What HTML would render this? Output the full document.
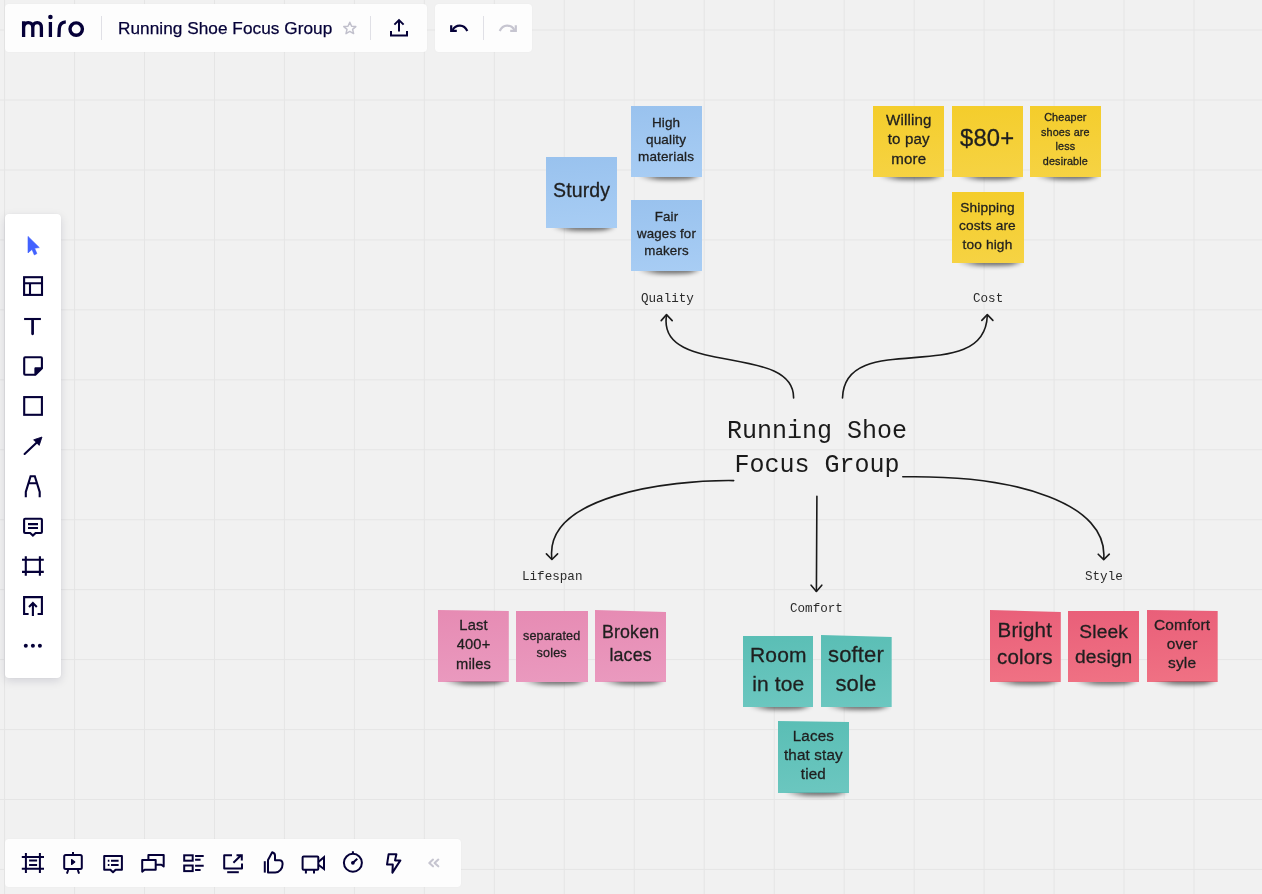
<!DOCTYPE html>
<html><head><meta charset="utf-8">
<style>
html,body{margin:0;padding:0;}
body{width:1262px;height:894px;overflow:hidden;position:relative;background:#f1f1f1;font-family:"Liberation Sans",sans-serif;}
.grid{position:absolute;left:0;top:0;width:1262px;height:894px;}
.panel{position:absolute;background:#fdfdfd;border-radius:4px;box-shadow:0 0 1.5px rgba(0,0,0,0.05);}
.ic{position:absolute;overflow:visible}
.st{position:absolute;width:71px;height:71px;display:flex;align-items:center;justify-content:center;text-align:center;color:#1f1f1f;font-family:"Liberation Sans",sans-serif;}
.st{z-index:1}
.st::after{content:"";position:absolute;left:12%;right:4%;top:calc(100% - 4px);height:7px;background:linear-gradient(to right,rgba(0,0,0,0.1),rgba(0,0,0,0.5) 30%,rgba(0,0,0,0.55) 85%,rgba(0,0,0,0.2));filter:blur(2px);z-index:-1;border-radius:0 0 50% 50%;clip-path:inset(4px -10px -10px -10px);}
.st span{display:block;will-change:transform;letter-spacing:0.15px;-webkit-text-stroke:0.3px #1f1f1f}
.blue{background:linear-gradient(175deg,#99c2ee,#a8cdf4);}
.yel{background:linear-gradient(175deg,#f4cd2b,#f6d344);}
.pink{background:linear-gradient(175deg,#e68bb3,#ea9abf);}
.teal{background:linear-gradient(175deg,#5abeb5,#6cc7c0);}
.red{background:linear-gradient(175deg,#e95f79,#f07284);}
.lbl{position:absolute;font-family:"Liberation Mono",monospace;font-size:12.6px;color:#2a2a2a;white-space:nowrap;will-change:transform;}
</style></head>
<body>
<svg class="grid" width="1262" height="894" viewBox="0 0 1262 894" style="background:none"><g fill="#e5e5e5"><rect x="4.07" y="0" width="1" height="894"/><rect x="74.04" y="0" width="1" height="894"/><rect x="144.00" y="0" width="1" height="894"/><rect x="213.97" y="0" width="1" height="894"/><rect x="283.94" y="0" width="1" height="894"/><rect x="353.90" y="0" width="1" height="894"/><rect x="423.87" y="0" width="1" height="894"/><rect x="493.84" y="0" width="1" height="894"/><rect x="563.81" y="0" width="1" height="894"/><rect x="633.77" y="0" width="1" height="894"/><rect x="703.74" y="0" width="1" height="894"/><rect x="773.71" y="0" width="1" height="894"/><rect x="843.67" y="0" width="1" height="894"/><rect x="913.64" y="0" width="1" height="894"/><rect x="983.61" y="0" width="1" height="894"/><rect x="1053.57" y="0" width="1" height="894"/><rect x="1123.54" y="0" width="1" height="894"/><rect x="1193.51" y="0" width="1" height="894"/><rect x="0" y="29.55" width="1262" height="1"/><rect x="0" y="99.50" width="1262" height="1"/><rect x="0" y="169.45" width="1262" height="1"/><rect x="0" y="239.40" width="1262" height="1"/><rect x="0" y="309.35" width="1262" height="1"/><rect x="0" y="379.30" width="1262" height="1"/><rect x="0" y="449.25" width="1262" height="1"/><rect x="0" y="519.20" width="1262" height="1"/><rect x="0" y="589.15" width="1262" height="1"/><rect x="0" y="659.10" width="1262" height="1"/><rect x="0" y="729.05" width="1262" height="1"/><rect x="0" y="799.00" width="1262" height="1"/><rect x="0" y="868.95" width="1262" height="1"/></g></svg>

<!-- stickies -->
<div class="st blue" style="left:546px;top:157px;width:70.5px;height:71px;font-size:19.5px;line-height:26px;"><span style="margin-top:-6px">Sturdy</span></div>
<div class="st blue" style="left:631px;top:106px;font-size:13.5px;line-height:17.2px;"><span style="margin-top:-3px">High<br>quality<br>materials</span></div>
<div class="st blue" style="left:631px;top:200px;font-size:13.3px;line-height:17.2px;"><span style="margin-top:-3px">Fair<br>wages for<br>makers</span></div>

<div class="st yel" style="left:873px;top:106px;width:70.5px;font-size:15.1px;line-height:19.3px;"><span style="margin-top:-5px">Willing<br>to pay<br>more</span></div>
<div class="st yel" style="left:952px;top:106px;font-size:23.8px;line-height:30px;"><span style="margin-top:-8px">$80+</span></div>
<div class="st yel" style="left:1030px;top:106px;width:70.7px;font-size:10.8px;line-height:14.6px;"><span style="margin-top:-4px">Cheaper<br>shoes are<br>less<br>desirable</span></div>
<div class="st yel" style="left:951.5px;top:192px;width:72px;font-size:13.7px;line-height:18.3px;"><span style="margin-top:-2px">Shipping<br>costs are<br>too high</span></div>

<div class="st pink" style="clip-path:polygon(0 0,100% 1px,100% calc(100% + 14px),0 calc(100% + 14px));left:438px;top:610px;height:71.5px;width:70.8px;font-size:14.7px;line-height:19.3px;"><span style="margin-top:-1.5px">Last<br>400+<br>miles</span></div>
<div class="st pink" style="left:516px;top:611px;width:72px;font-size:12.6px;line-height:16.5px;"><span style="margin-top:-5px">separated<br>soles</span></div>
<div class="st pink" style="clip-path:polygon(0 0,100% 2px,100% calc(100% + 14px),0 calc(100% + 14px));left:595px;top:610px;height:71.8px;font-size:17.8px;line-height:23.4px;"><span style="margin-top:-3px">Broken<br>laces</span></div>

<div class="st teal" style="left:742.5px;top:636px;width:70.7px;font-size:21px;line-height:28.9px;"><span style="margin-top:-3px">Room<br>in toe</span></div>
<div class="st teal" style="clip-path:polygon(0 0,100% 2px,100% calc(100% + 14px),0 calc(100% + 14px));left:821px;top:635px;height:72px;width:70.7px;font-size:22px;line-height:29.2px;"><span style="margin-top:-3px">softer<br>sole</span></div>
<div class="st teal" style="clip-path:polygon(0 0,100% 1px,100% calc(100% + 14px),0 calc(100% + 14px));left:778px;top:721px;height:71.8px;width:71px;font-size:15.2px;line-height:19.2px;"><span style="margin-top:-4px">Laces<br>that stay<br>tied</span></div>

<div class="st red" style="clip-path:polygon(0 0,100% 2px,100% calc(100% + 14px),0 calc(100% + 14px));left:989.5px;top:610px;height:71.8px;width:71.3px;font-size:20.5px;line-height:26.6px;"><span style="margin-top:-5px">Bright<br>colors</span></div>
<div class="st red" style="left:1068px;top:611px;width:71px;font-size:19.2px;line-height:25.3px;"><span style="margin-top:-5px">Sleek<br>design</span></div>
<div class="st red" style="clip-path:polygon(0 0,100% 1px,100% calc(100% + 14px),0 calc(100% + 14px));left:1147px;top:610px;height:71.5px;width:70.7px;font-size:15.5px;line-height:19.2px;"><span style="margin-top:-3px">Comfort<br>over<br>syle</span></div>

<!-- labels -->
<div class="lbl" style="left:640.5px;top:292px;">Quality</div>
<div class="lbl" style="left:972.5px;top:292px;">Cost</div>
<div class="lbl" style="left:521.5px;top:570px;">Lifespan</div>
<div class="lbl" style="left:789.5px;top:602px;">Comfort</div>
<div class="lbl" style="left:1084.5px;top:570px;">Style</div>

<div style="position:absolute;left:727px;top:414.5px;font-family:'Liberation Mono',monospace;font-size:25px;line-height:34px;color:#1a1a1a;white-space:pre;text-align:center;will-change:transform;">Running Shoe
Focus Group</div>

<svg class="ic" style="left:0;top:0" width="1262" height="894" viewBox="0 0 1262 894">
 <g fill="none" stroke="#1a1a1a" stroke-width="1.6" stroke-linecap="round" stroke-linejoin="round">
  <path d="M793.6 398 C794.3 342.7 656.8 377.1 666.5 315.5"/>
  <path d="M661.2 320.6 L666.5 314.6 L672.2 320.6"/>
  <path d="M842.5 398 C844.5 327.1 984.8 388.5 987.3 315.5"/>
  <path d="M981.8 320.4 L987.3 314.6 L992.9 320.4"/>
  <path d="M733.7 480.6 C668 479.8 544 496 551.9 559"/>
  <path d="M546.4 553.9 L551.9 559.5 L557.6 553.9"/>
  <path d="M902.8 476.8 C1019.8 474.8 1108.6 504.4 1103.7 559"/>
  <path d="M1098.2 554.2 L1103.7 559.6 L1109.3 554.2"/>
  <path d="M816.9 496.2 L816.4 591.3"/>
  <path d="M811.1 585.2 L816.4 591.5 L821.8 585.2"/>
 </g>
</svg>

<!-- top-left panel -->
<div class="panel" style="left:5px;top:4px;width:422px;height:48px;"></div>
<div class="panel" style="left:435px;top:4px;width:97px;height:48px;"></div>
<svg class="ic" style="left:0;top:0" width="540" height="60" viewBox="0 0 540 60">
 <g fill="none" stroke="#050038" stroke-width="3.3">
  <path d="M23.6 37 V21.2 M23.6 28 C23.8 24.5 25.6 22.7 28.2 22.7 C31 22.7 32.8 24.6 32.8 27.8 V37 M32.8 27.8 C32.8 24.6 34.6 22.7 37.2 22.7 C39.8 22.7 41.4 24.6 41.4 27.8 V37"/>
  <path d="M50.4 22 V37"/>
  <path d="M58.9 37 L59.3 28.5 C59.6 24.2 62 22.2 65.8 21.9"/>
  <circle cx="76.2" cy="29.1" r="6.2" stroke-width="3.4"/>
 </g>
 <circle cx="50.4" cy="17" r="2.3" fill="#050038"/>
 <rect x="101" y="16" width="1" height="24" fill="#e0e0e6"/>
 <rect x="370" y="16" width="1" height="24" fill="#e0e0e6"/>
 <rect x="483" y="16" width="1" height="24" fill="#e0e0e6"/>
 <path d="M349.8 22.3 L351.6 26.2 L355.8 26.6 L352.6 29.4 L353.6 33.6 L349.8 31.4 L346 33.6 L347 29.4 L343.8 26.6 L348 26.2 Z" fill="none" stroke="#c1c0cc" stroke-width="1.5" stroke-linejoin="round"/>
 <g fill="none" stroke="#050038" stroke-width="2">
  <path d="M391 31 V35.6 H407 V31"/>
  <path d="M399 31.6 V20.6 M394.4 24.6 L399 20.1 L403.6 24.6"/>
 </g>
 <g fill="none" stroke="#050038" stroke-width="2.2">
  <path d="M452.6 30 C456 24.2 464 24 467.3 31"/>
  <path d="M451.2 25.2 V30.8 H456.8" stroke-linejoin="miter"/>
 </g>
 <g fill="none" stroke="#c6c5d0" stroke-width="2.2">
  <path d="M514.4 30 C511 24.2 503 24 499.7 31"/>
  <path d="M515.8 25.2 V30.8 H510.2"/>
 </g>
</svg>
<div style="position:absolute;left:118px;top:17px;font-size:17.2px;line-height:22px;color:#050038;white-space:nowrap;will-change:transform;-webkit-text-stroke:0.25px #050038;letter-spacing:0.05px;">Running Shoe Focus Group</div>

<!-- left toolbar -->
<div class="panel" style="left:5px;top:214px;width:56px;height:464px;background:#fff;box-shadow:0 3px 10px rgba(5,0,56,0.13),0 0 1.5px rgba(5,0,56,0.08);"></div>

<!-- bottom toolbar -->
<div class="panel" style="left:5px;top:839px;width:456px;height:48px;"></div>
<svg class="ic" style="left:0;top:200px" width="70" height="480" viewBox="0 200 70 480">
 <path d="M28 236.4 L39.3 247.6 L34.6 248.2 L36.9 253.6 L34.3 254.9 L32 249.4 L28 252.9 Z" fill="#4262ff" stroke="#4262ff" stroke-width="0.6" stroke-linejoin="round"/>
 <g fill="none" stroke="#050038" stroke-width="2.1">
  <rect x="24.1" y="277.2" width="17.9" height="17.7"/>
  <path d="M24 283.2 H42 M30 283.2 V295"/>
  <path d="M24.1 319 H40.9"/><path d="M32.6 320.4 V333.8" stroke-width="2.7" stroke-linecap="round"/>
  <path d="M25.2 357.2 H40.9 C41.5 357.2 41.9 357.6 41.9 358.2 V368.2 L35.4 374.8 H25.2 C24.6 374.8 24.2 374.4 24.2 373.8 V358.2 C24.2 357.6 24.6 357.2 25.2 357.2 Z"/>
  <rect x="24.2" y="397.1" width="17.7" height="17.7"/>
  <path d="M24.6 454 L36.5 442.8" stroke-linecap="round"/>
  <path d="M25.8 497.3 V492 L30.6 476.3 H34.8 L39.7 492 V497.3 M28.4 483.2 H37"/>
  <path d="M25.1 518.8 H40.9 C41.5 518.8 41.9 519.2 41.9 519.8 V532 C41.9 532.6 41.5 533 40.9 533 H35.6 L32.9 535.6 L30.2 533 H25.1 C24.5 533 24.1 532.6 24.1 532 V519.8 C24.1 519.2 24.5 518.8 25.1 518.8 Z"/>
  <path d="M28 524.1 H38 M28 528 H38"/>
  <path d="M22 559.7 H43.8 M22 571.9 H43.8 M25.8 556.2 V575.8 M39.9 556.2 V575.8"/>
  <path d="M28.6 614 H24.1 V597.1 H41.9 V614 H37.6"/>
  <path d="M32.9 616 V603.2 M29 607 L32.9 603.1 L36.8 607"/>
 </g>
 <path d="M42 437 L33.6 439.8 L39.2 445.4 Z" fill="#050038" stroke="#050038" stroke-width="0.8" stroke-linejoin="round"/>
 <path d="M34.4 375.6 L42.9 367.2 H35.6 C34.9 367.2 34.4 367.7 34.4 368.4 Z" fill="#050038"/>
 <g fill="#050038"><circle cx="25.8" cy="645.8" r="2"/><circle cx="32.9" cy="645.8" r="2"/><circle cx="39.9" cy="645.8" r="2"/></g>
</svg>
<svg class="ic" style="left:0;top:840px" width="470" height="50" viewBox="0 840 470 50">
 <g fill="none" stroke="#050038" stroke-width="2">
  <path d="M21.8 856.9 H44 M21.8 868.8 H44 M25.9 853.1 V872.9 M39.9 853.1 V872.9 M29.1 860.6 H37.1 M29.1 865 H37.1"/>
  <rect x="64.2" y="855" width="17.6" height="14" rx="1.5"/>
  <path d="M73 852.1 V855 M68.2 870 L66.9 873.7 M77.8 870 L79.1 873.7"/>
  <path d="M71.6 859.6 L74.8 862 L71.6 864.4 Z" fill="#050038" stroke-width="1.2" stroke-linejoin="round"/>
  <path d="M104.2 856 H121.9 V869.7 H115.6 L113 872.3 L110.4 869.7 H104.2 Z" stroke-linejoin="round"/>
  <path d="M111 860.7 H118.6 M111 865 H118.6 M107.8 860.7 H109.4 M107.8 865 H109.4"/>
  <path d="M142.2 871.6 V860.1 H155.7 V869.7 H144.6 Z" stroke-linejoin="round"/>
  <path d="M148.4 859.5 V855 H163.7 V866.5 L161.4 864.8 H156" stroke-linejoin="round"/>
  <rect x="184.2" y="855.3" width="8.5" height="5.4"/>
  <rect x="184.2" y="865.5" width="8.5" height="5.6"/>
  <path d="M195.1 856 H203.7 M195.1 859.7 H200.6 M195.1 865.7 H203.7 M195.1 869.9 H200.6"/>
  <path d="M232 855.3 H224.2 V868.5 H242 V863.5" stroke-linejoin="round"/>
  <path d="M233.4 862.8 L241.6 854.8 M236.5 855.3 H241.8 V860.5"/>
  <path d="M227.2 872.2 H238.8"/>
  <path d="M264.8 861.2 V872.6"/>
  <path d="M268 872.6 V860 L272.2 852.3 C273.8 852.8 275 854 275 855.6 V860.2 H279.5 C281.5 860.2 282.6 862 282.6 864 C282.6 868.5 279.5 872.6 275.2 872.6 Z" stroke-linejoin="round"/>
  <rect x="302.6" y="856.5" width="15.7" height="13.2" rx="1"/>
  <path d="M318.3 862 L324 857.2 V869 L318.3 864.8"/>
  <path d="M305.9 870 V873.6 M314 870 V873.6"/>
  <circle cx="352.9" cy="862.8" r="9"/>
  <path d="M352.9 851.2 V853.6 M352.9 862.8 L357.3 858.7"/>
  <path d="M388.6 854.3 H396.4 L395 860.4 H400.4 L392.4 872.6 L392.8 864.6 H387 Z" stroke-linejoin="round"/>
 </g>
 <circle cx="352.9" cy="862.8" r="1.9" fill="#050038"/>
 <path d="M433 859.6 L429.3 863 L433 866.3 M438.3 859.6 L434.6 863 L438.3 866.3" fill="none" stroke="#c6c5d0" stroke-width="2.1" stroke-linecap="round" stroke-linejoin="round"/>
</svg>

</body></html>
